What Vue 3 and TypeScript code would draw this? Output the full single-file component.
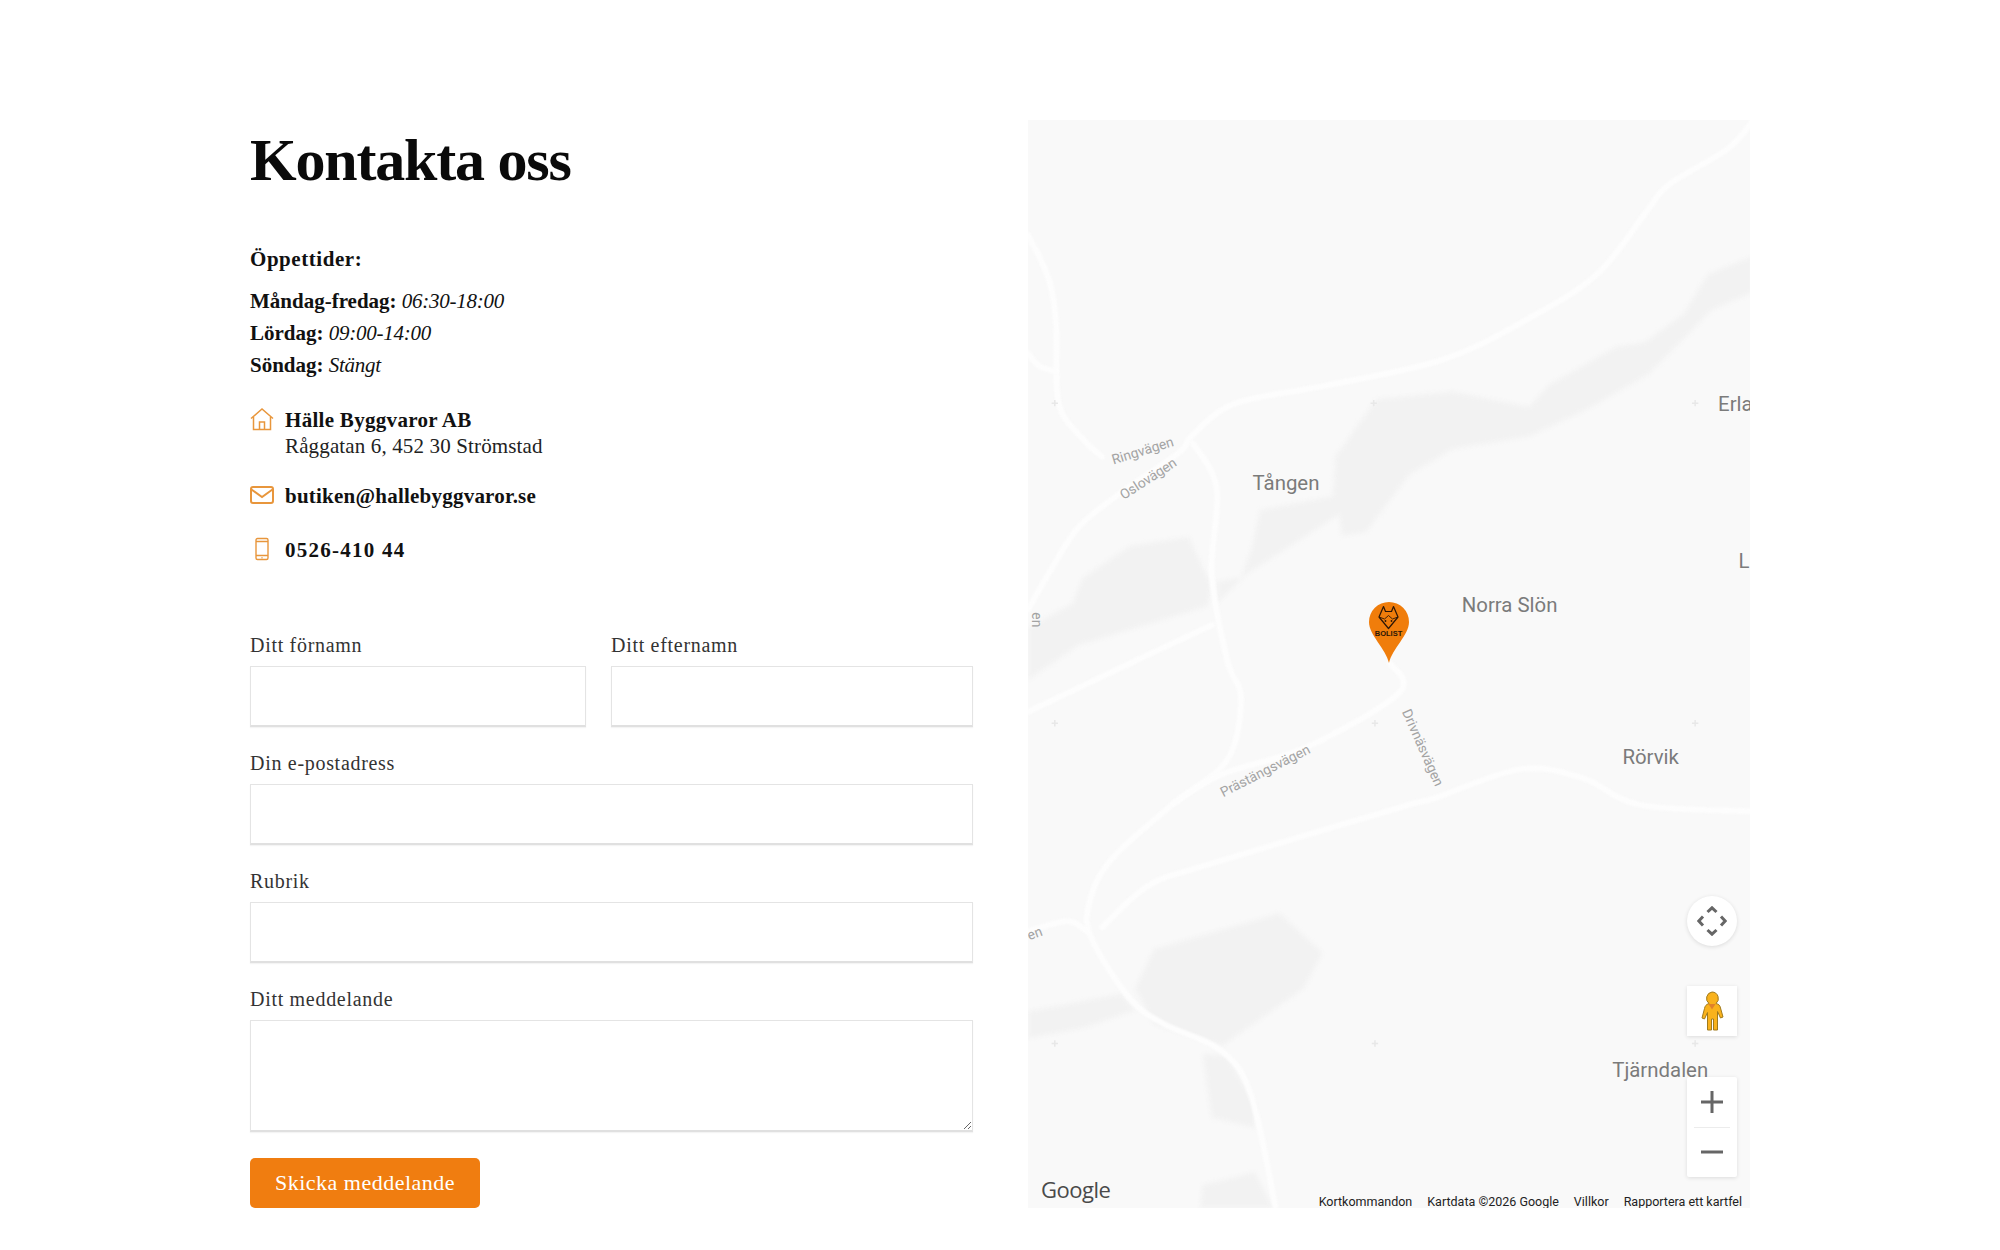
<template>
  <div class="page">
    <section class="info">
      <h1>Kontakta oss</h1>

      <div class="hours">
        <p class="hours-title">Öppettider:</p>
        <p v-for="row in hours" :key="row.day" class="hours-row">
          <strong>{{ row.day }}:</strong> <em>{{ row.time }}</em>
        </p>
      </div>

      <div class="contact address">
        <svg class="icon" width="24" height="24" viewBox="0 0 24 24" fill="none" stroke="#e8963c" stroke-width="1.5">
          <path d="M1 11.500 12 2l11 9.500" />
          <path d="M3.500 10v12.500h17V10" />
          <path d="M9.500 22.500V15h5v7.500" />
        </svg>
        <div>
          <strong>Hälle Byggvaror AB</strong><br />
          <span class="street">Råggatan 6, 452 30 Strömstad</span>
        </div>
      </div>

      <div class="contact mail">
        <svg class="icon" width="24" height="18" viewBox="0 0 24 18" fill="none" stroke="#e8963c" stroke-width="2">
          <rect x="1" y="1" width="22" height="16" rx="2" />
          <path d="M1.500 3.500 12 11l10.500-7.500" />
        </svg>
        <strong>butiken@hallebyggvaror.se</strong>
      </div>

      <div class="contact phone">
        <svg class="icon" width="24" height="24" viewBox="0 0 24 24" fill="none" stroke="#e8963c" stroke-width="1.4">
          <rect x="6" y="1.500" width="12" height="21" rx="1.500" />
          <path d="M6 4.500h12M6 18.500h12" />
          <path d="M11.500 20.800h1" />
        </svg>
        <strong>0526-410 44</strong>
      </div>

      <form class="form" @submit.prevent>
        <div class="name-row">
          <label class="field first">
            <span>Ditt förnamn</span>
            <input type="text" />
          </label>
          <label class="field last">
            <span>Ditt efternamn</span>
            <input type="text" />
          </label>
        </div>
        <label class="field">
          <span>Din e-postadress</span>
          <input type="email" />
        </label>
        <label class="field">
          <span>Rubrik</span>
          <input type="text" />
        </label>
        <label class="field">
          <span>Ditt meddelande</span>
          <textarea></textarea>
        </label>
        <button type="submit">Skicka meddelande</button>
      </form>
    </section>

    <section class="map">
      
      <svg class="tiles" viewBox="806 94 566 853" preserveAspectRatio="none">
        <polygon v-for="(pts, i) in hills" :key="i" class="hill" :points="pts" />
        <path v-for="(pts, i) in roads" :key="'r' + i" class="road" :d="smooth(pts)" />
        <g v-for="m in markers" :key="m[0] + '-' + m[1]" stroke="#e8e8e8" stroke-width="1.200">
          <path :d="`M${m[0] - 2.500} ${m[1]}h5M${m[0]} ${m[1] - 2.500}v5`" />
        </g>
        <text
          v-for="l in roadLabels"
          :key="l.x"
          class="road-label"
          :transform="`translate(${l.x} ${l.y}) rotate(${l.r})`"
        >{{ l.name }}</text>
        <text v-for="p in places" :key="p.name" class="place" :x="p.x" :y="p.y">{{ p.name }}</text>
      </svg>

      <div class="pin">
        <svg width="40" height="62" viewBox="0 0 40 62">
          <path d="M20 61C17 47 0 33 0 20a20 20 0 0 1 40 0C40 33 23 47 20 61Z" fill="#f07d0b" />
          <path d="M14.500 4.500 16.500 9.500H22.500L24.500 4.500 29 15 19.500 26.500 10 15Z" fill="none" stroke="#2b1607" stroke-width="1.200" stroke-linejoin="round" />
          <path d="M10 15l5.500 2 4-3.500 4 3.500 5.500-2" fill="none" stroke="#2b1607" stroke-width="0.900" />
          <circle cx="16.500" cy="19" r="0.900" fill="#2b1607" />
          <circle cx="22.500" cy="19" r="0.900" fill="#2b1607" />
          <text x="19.500" y="33.500" text-anchor="middle" class="pin-text">BOLIST</text>
        </svg>
      </div>

      <div class="control compass">
        <svg width="30" height="30" viewBox="0 0 30 30" fill="none" stroke="#666" stroke-width="3">
          <path d="M10.500 6 15 1.800 19.500 6M10.500 24l4.500 4.200 4.500-4.200M6 10.500 1.800 15 6 19.500M24 10.500l4.200 4.500-4.200 4.500" />
        </svg>
      </div>

      <div class="control pegman">
        <svg width="26" height="40" viewBox="0 0 26 40">
          <path d="M13 1a6.500 6.500 0 0 1 4 11.500c3 .8 4 2 4.500 4.500l2.500 9-2.500 1-3-6.500V39h-4V28h-2v11H8.500V21.500L5.500 28 3 27l2.500-9.500c.5-2.500 1.500-4 4.500-5A6.500 6.500 0 0 1 13 1Z" fill="#f9b21c" stroke="#a07a1c" stroke-width="1" />
          <path d="M9.500 13l3.500 5.500 3.500-5.500Z" fill="#e0812a" />
        </svg>
      </div>

      <div class="control zoom">
        <div class="zoom-btn">
          <svg width="24" height="24" viewBox="0 0 24 24" stroke="#666" stroke-width="3">
            <path d="M12 1v22M1 12h22" />
          </svg>
        </div>
        <span class="zoom-sep"></span>
        <div class="zoom-btn">
          <svg width="24" height="24" viewBox="0 0 24 24" stroke="#666" stroke-width="3">
            <path d="M1 12h22" />
          </svg>
        </div>
      </div>

      <div class="logo">Google</div>
      <div class="attribution">
        <span>Kortkommandon</span>
        <span>Kartdata ©2026 Google</span>
        <span>Villkor</span>
        <span>Rapportera ett kartfel</span>
      </div>
    </section>
  </div>
</template>

<script setup lang="ts">
type Point = [number, number];

interface RoadLabel {
  name: string;
  x: number;
  y: number;
  r: number;
}

const hours = [
  { day: 'Måndag-fredag', time: '06:30-18:00' },
  { day: 'Lördag', time: '09:00-14:00' },
  { day: 'Söndag', time: 'Stängt' },
];

const roads: Point[][] = [
  [[1374, 95], [1354, 117], [1308, 145], [1290, 167], [1252, 215], [1196, 251], [1131, 282], [1041, 302], [969, 316], [935, 341], [924, 355], [875, 389], [845, 414], [822, 450], [806, 478]],
  [[806, 184], [822, 218], [828, 254], [830, 316], [849, 344], [864, 358]],
  [[806, 277], [815, 287], [828, 291]],
  [[935, 347], [954, 383], [950, 450], [962, 517], [973, 548], [962, 596], [920, 630], [871, 674], [854, 708], [856, 736], [886, 783], [913, 803], [958, 824], [981, 859], [1000, 946]],
  [[864, 727], [901, 694], [950, 677], [1101, 632], [1124, 626], [1192, 603], [1241, 610], [1286, 631], [1374, 636]],
  [[1090, 520], [1097, 543], [1026, 585], [958, 607], [920, 630]],
  [[806, 558], [886, 520], [950, 490]],
  [[806, 730], [837, 722], [852, 730]],
];

const hills: string[] = [
  '1374,201 1339,215 1320,246 1290,268 1267,272 1214,302 1199,319 1139,307 1079,313 1047,358 1045,389 988,400 981,431 973,453 954,456 954,473 977,450 1007,431 1050,403 1052,420 1071,417 1105,372 1139,352 1199,342 1244,321 1293,293 1342,243 1374,229',
  '932,421 886,428 849,453 841,473 806,492 806,533 845,506 947,475 950,459',
  '905,744 1003,716 1037,747 1022,775 958,820 905,803 890,775',
  '806,793 879,779 890,792 849,806 806,814',
  '943,826 962,828 984,865 984,884 950,876',
  '941,947 943,929 984,919 998,947',
];

const markers: number[][] = [
  [827, 316], [1077, 316], [1329, 316],
  [827, 567], [1078, 567], [1329, 567],
  [827, 818], [1078, 818], [1329, 818],
];

const roadLabels: RoadLabel[] = [
  { name: 'Ringvägen', x: 873, y: 364, r: -17 },
  { name: 'Oslovägen', x: 881, y: 392, r: -33 },
  { name: 'Prästängsvägen', x: 959, y: 625, r: -27 },
  { name: 'Drivnäsvägen', x: 1099, y: 558, r: 66 },
  { name: 'en', x: 807, y: 737, r: -20 },
  { name: 'en', x: 809, y: 480, r: 90 },
];

const places = [
  { name: 'Tången', x: 982, y: 384 },
  { name: 'Norra Slön', x: 1146, y: 480 },
  { name: 'Rörvik', x: 1272, y: 599 },
  { name: 'Tjärndalen', x: 1264, y: 844 },
  { name: 'Erla', x: 1347, y: 322 },
  { name: 'L', x: 1363, y: 445 },
];

// Catmull-Rom through the traced points, so the roads don't look like polylines
function smooth(pts: Point[]): string {
  let d = `M${pts[0][0]} ${pts[0][1]}`;
  for (let i = 0; i < pts.length - 1; i++) {
    const p0 = pts[i - 1] ?? pts[i];
    const p1 = pts[i];
    const p2 = pts[i + 1];
    const p3 = pts[i + 2] ?? p2;
    const c1x = p1[0] + (p2[0] - p0[0]) / 6;
    const c1y = p1[1] + (p2[1] - p0[1]) / 6;
    const c2x = p2[0] - (p3[0] - p1[0]) / 6;
    const c2y = p2[1] - (p3[1] - p1[1]) / 6;
    d += `C${c1x} ${c1y} ${c2x} ${c2y} ${p2[0]} ${p2[1]}`;
  }
  return d;
}
</script>

<style>
html,
body {
  background: #fff;
}
</style>

<style scoped>
.page {
  width: 1500px;
  margin: 0 auto;
  padding-top: 120px;
  display: flex;
  gap: 55px;
  align-items: flex-start;
  font-family: "Liberation Serif", "Times New Roman", serif;
  color: #111;
}

.info {
  width: 723px;
}

h1 {
  margin: 0;
  font-size: 60px;
  line-height: 80px;
  font-weight: 700;
  letter-spacing: -1.200px;
  color: #0a0a0a;
}

.hours {
  margin-top: 43px;
  font-size: 21px;
}

.hours p {
  margin: 0;
  line-height: 32px;
}

.hours-title {
  font-weight: 700;
  letter-spacing: 0.550px;
  margin-bottom: 10px !important;
}

.hours-row em {
  letter-spacing: -0.250px;
}

.contact {
  display: flex;
  gap: 11px;
  font-size: 21px;
  line-height: 26px;
}

.icon {
  flex-shrink: 0;
}

.address {
  margin-top: 26px;
}

.address strong {
  letter-spacing: 0.300px;
}

.street {
  color: #222;
  letter-spacing: 0.140px;
}

.mail {
  margin-top: 24px;
}

.mail strong {
  letter-spacing: 0.230px;
}

.mail .icon {
  margin-top: 3px;
}

.phone {
  margin-top: 28px;
}

.phone strong {
  letter-spacing: 1.250px;
}

.form {
  margin-top: 70px;
  display: flex;
  flex-direction: column;
  gap: 24px;
}

.name-row {
  display: flex;
  gap: 25px;
}

.field {
  display: flex;
  flex-direction: column;
  gap: 9px;
  font-size: 20px;
  line-height: 24px;
  letter-spacing: 0.700px;
  color: #333;
}

.field.first {
  width: 336px;
}

.field.last {
  flex: 1;
}

input,
textarea {
  box-sizing: border-box;
  display: block;
  width: 100%;
  height: 61px;
  background: #fff;
  border: 1px solid #e4e4e4;
  border-bottom: 2px solid #e0e0e0;
  box-shadow: 0 1px 1px #f4f4f4;
  outline: none;
  margin: 0;
  padding: 8px 12px;
}

textarea {
  height: 112px;
  resize: vertical;
}

button {
  align-self: flex-start;
  width: 230px;
  height: 50px;
  margin-top: 2px;
  background: #f07d10;
  color: #fff;
  border: none;
  border-radius: 5px;
  font-family: inherit;
  font-size: 22px;
  letter-spacing: 0.500px;
}

.map {
  position: relative;
  width: 722px;
  height: 1088px;
  overflow: hidden;
  background: #f9f9f9;
}

.tiles {
  display: block;
  width: 100%;
  height: 100%;
}

.hill {
  fill: #f2f2f2;
  filter: blur(1.500px);
}

.road {
  fill: none;
  stroke: #fdfdfd;
  stroke-width: 4.500;
  stroke-linecap: round;
  filter: blur(0.800px);
}

.place {
  font-family: Roboto, sans-serif;
  font-size: 16px;
  fill: #7b7b7b;
}

.road-label {
  font-family: Roboto, sans-serif;
  font-size: 10.800px;
  fill: #a3a3a3;
}

.pin {
  position: absolute;
  left: 341px;
  top: 482px;
  line-height: 0;
}

.pin-text {
  font-family: "Liberation Sans", sans-serif;
  font-size: 7.500px;
  font-weight: 700;
  fill: #2b1607;
}

.control {
  position: absolute;
  right: 13px;
  width: 50px;
  display: flex;
  align-items: center;
  justify-content: center;
  background: #fff;
  box-shadow: 0 1px 4px rgba(0, 0, 0, 0.12);
}

.compass {
  top: 776px;
  height: 50px;
  border-radius: 50%;
}

.pegman {
  top: 866px;
  height: 50px;
}

.zoom {
  top: 957px;
  flex-direction: column;
  border-radius: 2px;
}

.zoom-btn {
  height: 50px;
  display: flex;
  align-items: center;
  justify-content: center;
}

.zoom-sep {
  width: 36px;
  height: 1px;
  margin: -0.500px 0;
  background: #ececec;
}

.logo {
  position: absolute;
  left: 13px;
  bottom: 4px;
  font-family: "Open Sans", sans-serif;
  font-size: 22px;
  letter-spacing: -0.500px;
  color: #4a4a4a;
}

.attribution {
  position: absolute;
  right: 8px;
  bottom: -2px;
  display: flex;
  gap: 15px;
  font-family: Roboto, sans-serif;
  font-size: 12.500px;
  line-height: 16px;
  color: #222;
}
</style>
